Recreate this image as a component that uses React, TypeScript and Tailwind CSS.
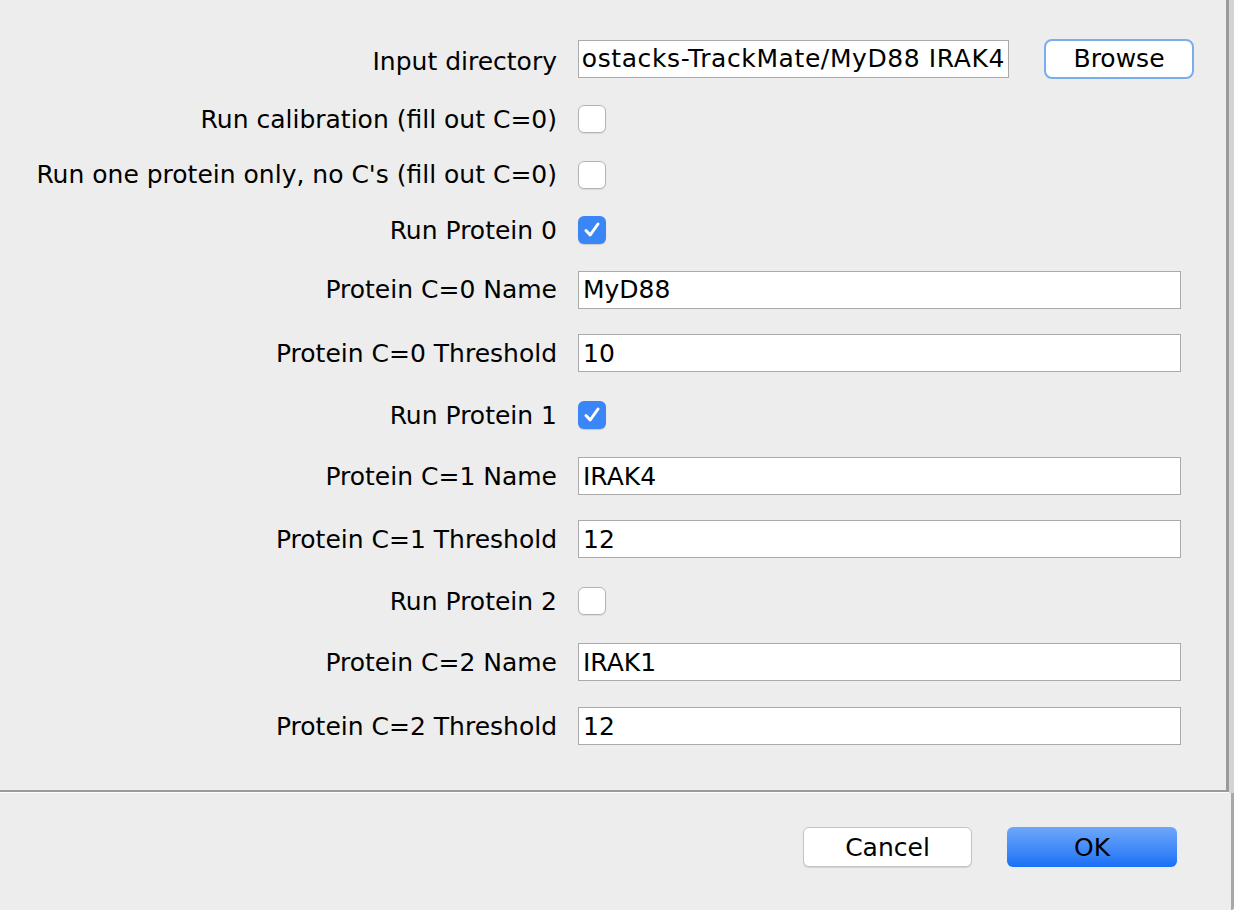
const rows: (
  | { kind: "dir"; label: string; value: string }
  | { kind: "check"; label: string; checked: boolean; h: number }
  | { kind: "text"; label: string; value: string; h: number }
)[] = [
  { kind: "dir", label: "Input directory", value: "ostacks-TrackMate/MyD88 IRAK4" },
  { kind: "check", label: "Run calibration (fill out C=0)", checked: false, h: 56 },
  { kind: "check", label: "Run one protein only, no C's (fill out C=0)", checked: false, h: 55 },
  { kind: "check", label: "Run Protein 0", checked: true, h: 56 },
  { kind: "text", label: "Protein C=0 Name", value: "MyD88", h: 63 },
  { kind: "text", label: "Protein C=0 Threshold", value: "10", h: 64 },
  { kind: "check", label: "Run Protein 1", checked: true, h: 60 },
  { kind: "text", label: "Protein C=1 Name", value: "IRAK4", h: 62 },
  { kind: "text", label: "Protein C=1 Threshold", value: "12", h: 64 },
  { kind: "check", label: "Run Protein 2", checked: false, h: 60 },
  { kind: "text", label: "Protein C=2 Name", value: "IRAK1", h: 62 },
  { kind: "text", label: "Protein C=2 Threshold", value: "12", h: 66 },
];

function Checkbox({ checked }: { checked: boolean }) {
  if (checked) {
    return (
      <div className="w-[28px] h-[28px] rounded-[6px] bg-[#3b86f6] flex items-center justify-center shadow-[0_1px_1px_rgba(0,0,0,0.15)]">
        <svg width="20" height="20" viewBox="0 0 20 20" fill="none">
          <path d="M4 10.5 L8.2 15 L16 4" stroke="white" strokeWidth="3" strokeLinecap="round" strokeLinejoin="round" />
        </svg>
      </div>
    );
  }
  return (
    <div className="w-[28px] h-[28px] rounded-[6px] bg-white border border-[#b3b3b3] shadow-[0_1px_1px_rgba(0,0,0,0.08)]" />
  );
}

export default function App() {
  return (
    <div className="w-[1234px] h-[910px] bg-[#ededed] flex flex-col text-black font-['DejaVu_Sans',sans-serif] text-[25px] overflow-hidden">
      {/* Form area */}
      <div className="h-[793px] flex">
        <div className="w-[1229px] border-r border-r-white">
          <div className="h-[790px] w-[1228px] pt-[32px]">
            {rows.map((row) => (
              <div
                key={row.label}
                className="flex items-center"
                style={{ height: row.kind === "dir" ? 59 : row.h }}
              >
                <div className="w-[557px] text-right whitespace-nowrap leading-none">{row.label}</div>
                <div className="ml-[21px] flex items-center">
                  {row.kind === "dir" && (
                    <div className="flex items-center mb-[6px]">
                      <div className="w-[431px] h-[38px] bg-white border border-[#aaaaaa] flex justify-end items-center overflow-hidden whitespace-nowrap pr-[3px] leading-none tracking-[0.6px]">
                        {row.value}
                      </div>
                      <button className="ml-[35px] w-[150px] h-[40px] bg-white rounded-[8px] border-2 border-[#78aeee] leading-none">
                        Browse
                      </button>
                    </div>
                  )}
                  {row.kind === "check" && <Checkbox checked={row.checked} />}
                  {row.kind === "text" && (
                    <div className="w-[603px] h-[38px] bg-white border border-[#aaaaaa] flex items-center pl-[4px] leading-none">
                      {row.value}
                    </div>
                  )}
                </div>
              </div>
            ))}
          </div>
          <div className="h-[2px] bg-[#9a9a9a]" />
          <div className="h-px bg-white" />
        </div>
        <div className="w-[3px] bg-[#9a9a9a] -ml-[3px] h-[792px]" />
        <div className="w-[5px] bg-[#d4d4d4] h-[793px]" />
      </div>

      {/* Button bar */}
      <div className="flex-1 flex">
        <div className="w-[1231px] rounded-br-[10px] pt-[34px] flex justify-end pr-[54px] gap-[35px]">
          <button className="w-[169px] h-[40px] bg-white rounded-[6px] border border-[#c4c4c4] shadow-[0_1px_1px_rgba(0,0,0,0.12)] leading-none">
            Cancel
          </button>
          <button className="w-[170px] h-[40px] rounded-[6px] bg-gradient-to-b from-[#6da7fa] to-[#1770f6] leading-none">
            OK
          </button>
        </div>
        <div className="w-[3px] bg-[#a8a8a8] rounded-br-[6px]" />
      </div>
    </div>
  );
}
